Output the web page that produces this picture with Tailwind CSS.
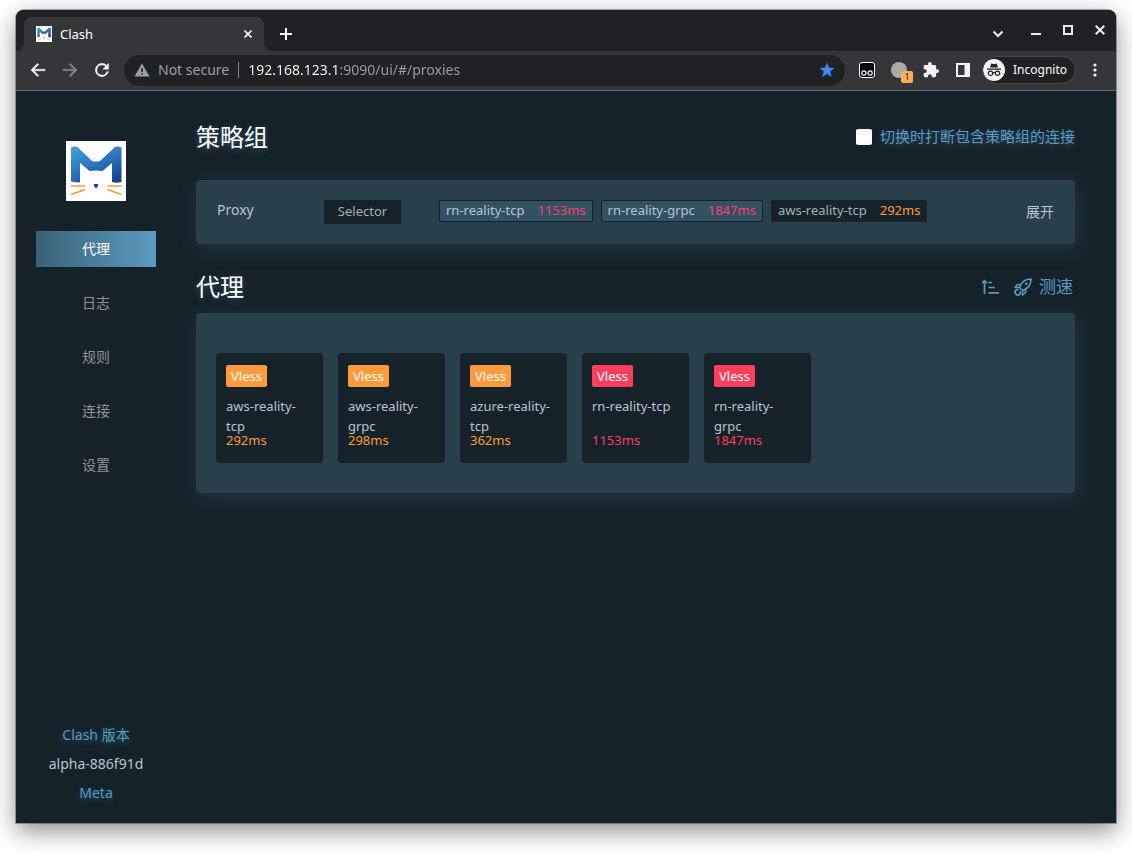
<!DOCTYPE html>
<html lang="zh-CN">
<head>
<meta charset="utf-8">
<title>Clash</title>
<script src="https://cdn.jsdelivr.net/npm/@tailwindcss/browser@4"></script>
</head>
<body class="flex min-h-screen flex-col bg-white px-4 pt-[10px] pb-8 font-['Noto_Sans','Noto_Sans_CJK_SC',sans-serif] text-sm text-[#b7c5d6]">
<svg class="absolute size-0" aria-hidden="true">
  <defs>
    <linearGradient id="blue" x1="0.2" y1="0" x2="0.8" y2="1"><stop offset="0" stop-color="#3f9fd6"/><stop offset="0.5" stop-color="#2b72ba"/><stop offset="1" stop-color="#183f93"/></linearGradient>
  </defs>
  <symbol id="logo" viewBox="0 0 60 60">
    <path fill="#fff" d="M0 0h60v60H0z"/>
    <path fill="url(#blue)" d="M5 6.500Q8 5 11.500 6L26 20q4 1 8 0L49 6q3-1 6.500.5V41q-5 1.500-9.500 0V22L36.500 30q-6.500-1-13 0L14 22v19.500q-5 0-9-1z"/>
    <path fill="#183f93" d="M28 43h4v2l-2 2.500-2-2.500z"/>
    <path stroke="#f39a35" stroke-width="1.700" fill="none" d="M5 45h14M5 53.500l14-5M41.500 45h14M41.500 48.500l14 5"/>
  </symbol>
</svg>
<div class="flex grow flex-col overflow-hidden rounded-t-lg bg-[#15222a] shadow-[0_0_0_1px_#0000004d,0_8px_24px_#00000073]">
  <header class="bg-[#202124] text-white">
    <div class="flex h-[41px] items-end">
      <div class="flex h-[34px] grow items-end">
        <div class="h-2 w-2 bg-[#35363a]"><div class="h-2 w-2 rounded-br-lg bg-[#202124]"></div></div>
        <div class="flex h-[34px] w-60 items-center gap-2 rounded-t-lg bg-[#35363a] pr-2 pl-3 text-[13px]">
          <svg class="size-4"><use href="#logo"/></svg>
          <span class="grow">Clash</span>
          <button aria-label="Close tab" class="flex size-4 items-center justify-center"><svg class="size-2" viewBox="0 0 8 8" stroke="#fff" stroke-width="1.600"><path d="M.5.5l7 7M7.500.5l-7 7"/></svg></button>
        </div>
        <div class="h-2 w-2 bg-[#35363a]"><div class="h-2 w-2 rounded-bl-lg bg-[#202124]"></div></div>
        <button aria-label="New tab" class="flex h-[34px] w-7 items-center justify-center"><svg class="size-3" viewBox="0 0 12 12" stroke="#fff" stroke-width="2"><path d="M6 0v12M0 6h12"/></svg></button>
      </div>
      <div class="flex h-10 items-center gap-[22px] self-start pr-[11px]">
        <button aria-label="Search tabs" class="mt-2 mr-[6px]"><svg class="size-[10px]" viewBox="0 0 10 10" fill="none" stroke="#e8eaed" stroke-width="2"><path d="M.5 2.500L5 7l4.500-4.500"/></svg></button>
        <button aria-label="Minimize"><svg class="size-[10px]" viewBox="0 0 10 10"><path fill="#e8eaed" d="M0 8h10v2H0z"/></svg></button>
        <button aria-label="Maximize"><svg class="size-[10px]" viewBox="0 0 10 10" fill="none" stroke="#e8eaed" stroke-width="2"><path d="M1 1h8v8H1z"/></svg></button>
        <button aria-label="Close"><svg class="size-[10px]" viewBox="0 0 10 10" stroke="#e8eaed" stroke-width="2"><path d="M.7.7l8.600 8.600M9.300.7L.7 9.300"/></svg></button>
      </div>
    </div>
    <div class="flex h-10 items-center border-b border-[#66676b] bg-[#35363a] px-3 pb-px">
      <div class="flex gap-3">
        <button aria-label="Back"><svg class="size-5" viewBox="0 0 24 24" fill="#f1f3f4"><path d="M20.500 11H7.300l5.600-5.600L11.500 4l-8 8 8 8 1.400-1.400L7.300 13h13.200z" stroke="#f1f3f4" stroke-width=".5"/></svg></button>
        <button aria-label="Forward"><svg class="size-5" viewBox="0 0 24 24" fill="#85868a"><path d="M3.500 11h13.200l-5.600-5.600L12.500 4l8 8-8 8-1.400-1.400 5.600-5.600H3.500z" stroke="#85868a" stroke-width=".5"/></svg></button>
        <button aria-label="Reload"><svg class="size-5" viewBox="0 0 24 24" fill="#f1f3f4"><path stroke="#f1f3f4" stroke-width=".5" d="M17.650 6.350A8 8 0 1 0 19.730 14h-2.080A6 6 0 1 1 12 6c1.660 0 3.140.69 4.220 1.780L13 11h7V4z"/></svg></button>
      </div>
      <div class="ml-3 flex h-[31px] grow items-center rounded-full bg-[#202124] px-[10px]">
        <svg class="size-4" viewBox="0 0 16 16"><path fill="#9aa0a6" d="M8 1.500L15.500 14.500H.5z"/><path fill="#202124" d="M7.200 6h1.600v4H7.200zM7.200 11.200h1.600v1.600H7.200z"/></svg>
        <span class="ml-2 text-[#9aa0a6]">Not secure</span>
        <span class="mx-[9px] h-4 w-px bg-[#85868a]"></span>
        <input aria-label="Address" class="min-w-0 grow bg-linear-to-r from-white from-[92px] to-[#9aa0a6] to-[92px] bg-clip-text text-transparent outline-none" value="192.168.123.1:9090/ui/#/proxies">
        <button aria-label="Bookmarked"><svg class="size-4" viewBox="0 0 16 16" fill="#4285f4"><path d="M8 .5l2.100 5.200 5.400.4-4.200 3.500 1.400 5.400L8 12l-4.700 3 1.400-5.400L.5 6.100l5.400-.4z"/></svg></button>
      </div>
      <div class="ml-[14px] flex items-center gap-4">
        <button aria-label="Tampermonkey"><svg class="size-4" viewBox="0 0 16 16"><rect x=".5" y=".5" width="15" height="15" rx="2.500" fill="#000" stroke="#fff"/><g fill="none" stroke="#fff" stroke-width="1.200"><circle cx="4.900" cy="11" r="2.100"/><circle cx="11.100" cy="11" r="2.100"/></g></svg></button>
        <button aria-label="Extension" class="relative"><span class="block size-4 rounded-full bg-[#aaaaaa]"></span><span class="absolute top-[9px] left-[10px] flex h-3 w-3 items-center justify-center rounded-xs bg-[#f7b055] text-[9px] text-[#202124]">1</span></button>
        <button aria-label="Extensions"><svg class="size-4" viewBox="1 1 22 22" fill="#f1f3f4"><path d="M20.500 11H19V7a2 2 0 0 0-2-2h-4V3.500a2.500 2.500 0 0 0-5 0V5H4a2 2 0 0 0-2 2v3.800h1.500a2.700 2.700 0 0 1 0 5.400H2V20a2 2 0 0 0 2 2h3.800v-1.500a2.700 2.700 0 0 1 5.400 0V22H17a2 2 0 0 0 2-2v-4h1.500a2.500 2.500 0 0 0 0-5z"/></svg></button>
        <button aria-label="Side panel"><svg class="size-4" viewBox="0 0 16 16"><path fill="#f1f3f4" fill-rule="evenodd" d="M1 1h14v14H1zM3 3v10h6.500V3z"/></svg></button>
      </div>
      <button class="ml-3 flex h-[26px] items-center gap-2 rounded-full bg-[#202124] pr-2 text-xs outline outline-[#46474b]">
        <svg class="size-[22px]" viewBox="0 0 22 22"><circle cx="11" cy="11" r="11" fill="#f1f3f4"/><g fill="#202124"><path d="M8.300 4.500l2.700.7 2.700-.7 1.300 4H7zM4 9.500h14v1.300H4z"/></g><g fill="none" stroke="#202124" stroke-width="1.100"><circle cx="7.500" cy="14.300" r="2.200"/><circle cx="14.500" cy="14.300" r="2.200"/><path d="M9.700 14q1.300-.8 2.600 0"/></g></svg>
        Incognito
      </button>
      <button aria-label="Menu" class="ml-[18px] mr-[7px]"><svg class="h-[14px] w-[4px]" viewBox="0 0 4 14" fill="#f1f3f4"><circle cx="2" cy="2" r="1.600"/><circle cx="2" cy="7" r="1.600"/><circle cx="2" cy="12" r="1.600"/></svg></button>
    </div>
  </header>

  <div class="flex grow">
    <aside class="flex w-40 shrink-0 flex-col items-center px-5 pt-[50px] pb-4">
      <svg class="size-[60px]" role="img" aria-label="Clash"><use href="#logo"/></svg>
      <nav class="mt-[30px] flex w-full flex-col gap-[18px] text-center leading-9 text-[#909399]">
        <a href="#/proxies" class="bg-linear-to-r from-[#3b6177] to-[#5b9bc2] text-white">代理</a>
        <a href="#/logs">日志</a>
        <a href="#/rules">规则</a>
        <a href="#/connections">连接</a>
        <a href="#/settings">设置</a>
      </nav>
      <div class="mt-auto text-center leading-[29px] text-[#5b9bc2]">
        <p class="text-shadow-[0_2px_6px_#5b9bc266]">Clash 版本</p>
        <p class="text-[#b7c5d6]">alpha-886f91d</p>
        <p class="text-shadow-[0_2px_6px_#5b9bc266]">Meta</p>
      </div>
    </aside>

    <main class="min-w-0 grow pt-7 pr-[41px] pl-5">
      <div class="flex h-9 items-center justify-between">
        <h1 class="text-2xl text-white text-shadow-[0_2px_6px_#5b9bc266]">策略组</h1>
        <label for="break" class="flex items-center gap-2 text-[15px] text-[#5b9bc2] text-shadow-[0_2px_6px_#5b9bc266]">
          <input id="break" type="checkbox" class="size-4 appearance-none rounded-xs bg-white">切换时打断包含策略组的连接
        </label>
      </div>
      <section class="mt-[25px] flex h-16 items-start rounded-sm bg-[#2a3f4c] px-[21px] pt-5 shadow-[2px_5px_20px_2px_#4a7c9833]">
        <h2 class="w-[107px] shrink-0">Proxy</h2>
        <div class="w-[115px] shrink-0"><span class="inline-block h-6 w-[77px] bg-[#15222a] text-center text-[13px] leading-[22px] text-[#a6b0b8]">Selector</span></div>
        <div class="flex grow gap-2 text-[13px] leading-[18px] whitespace-nowrap">
          <button class="flex gap-[13px] rounded-xs border border-[#15222a] bg-[#325163] px-[6px] pb-[2px]">rn-reality-tcp<span class="text-[#ff3e6c]">1153ms</span></button>
          <button class="flex gap-[13px] rounded-xs border border-[#15222a] bg-[#325163] px-[6px] pb-[2px]">rn-reality-grpc<span class="text-[#ff3e6c]">1847ms</span></button>
          <button class="flex gap-[13px] rounded-xs border border-[#15222a] bg-[#15222a] px-[6px] pb-[2px] text-[#a6b0b8]">aws-reality-tcp<span class="text-[#ff9a3c]">292ms</span></button>
        </div>
        <button class="leading-6 text-[#b7c5d6]">展开</button>
      </section>

      <div class="mt-[25px] flex h-9 items-center justify-between">
        <h1 class="text-2xl text-white text-shadow-[0_2px_6px_#5b9bc266]">代理</h1>
        <div class="flex items-center gap-[15px] pr-[2px] text-[17px] text-[#5b9bc2] text-shadow-[0_2px_6px_#5b9bc266]">
          <button aria-label="排序"><svg class="size-[17px]" viewBox="0 0 17 17" fill="none" stroke="#5b9bc2" stroke-width="1.700"><path d="M2.500 15V2M0 4.200l2.500-2.500L5 4.200M6.500 3.500H10M6.500 8.500H13M6.500 13.800H17"/></svg></button>
          <button class="flex items-center gap-[7px]"><svg class="size-[18px]" viewBox="0 0 18 18" fill="none" stroke="#5b9bc2" stroke-width="1.600" stroke-linejoin="round"><path d="M5.500 9.500C7 5 10.500 1 17 1c0 6.500-4 10-8.500 11.500zM6.500 6.500H3.500L1 9.500l4.500 0M11.500 11.500v3L8.500 17v-4.500M4.500 12a2 2 0 0 0-2.500 4 2 2 0 0 0 4-2.500"/><circle cx="12.300" cy="5.700" r="1.300" fill="#5b9bc2" stroke="none"/></svg>测速</button>
        </div>
      </div>
      <ul class="mt-2 flex flex-wrap gap-[15px] rounded-sm bg-[#2a3f4c] px-5 pt-10 pb-[30px] text-[13px] leading-5 shadow-[2px_5px_20px_2px_#4a7c9833]">
        <li class="w-[107px] rounded-sm bg-[#15222a] px-[10px] pt-3 pb-[13px]"><span class="block w-fit rounded-xs bg-[#ff9a3c] px-[5px] leading-[22px] text-white">Vless</span><p class="mt-[9px] h-[34px]">aws-reality-tcp</p><p class="text-[#ff9a3c]">292ms</p></li>
        <li class="w-[107px] rounded-sm bg-[#15222a] px-[10px] pt-3 pb-[13px]"><span class="block w-fit rounded-xs bg-[#ff9a3c] px-[5px] leading-[22px] text-white">Vless</span><p class="mt-[9px] h-[34px]">aws-reality-grpc</p><p class="text-[#ff9a3c]">298ms</p></li>
        <li class="w-[107px] rounded-sm bg-[#15222a] px-[10px] pt-3 pb-[13px]"><span class="block w-fit rounded-xs bg-[#ff9a3c] px-[5px] leading-[22px] text-white">Vless</span><p class="mt-[9px] h-[34px]">azure-reality-tcp</p><p class="text-[#ff9a3c]">362ms</p></li>
        <li class="w-[107px] rounded-sm bg-[#15222a] px-[10px] pt-3 pb-[13px]"><span class="block w-fit rounded-xs bg-[#ff3e5e] px-[5px] leading-[22px] text-white">Vless</span><p class="mt-[9px] h-[34px]">rn-reality-tcp</p><p class="text-[#ff3e5e]">1153ms</p></li>
        <li class="w-[107px] rounded-sm bg-[#15222a] px-[10px] pt-3 pb-[13px]"><span class="block w-fit rounded-xs bg-[#ff3e5e] px-[5px] leading-[22px] text-white">Vless</span><p class="mt-[9px] h-[34px]">rn-reality-grpc</p><p class="text-[#ff3e5e]">1847ms</p></li>
      </ul>
    </main>
  </div>
</div>
</body>
</html>
